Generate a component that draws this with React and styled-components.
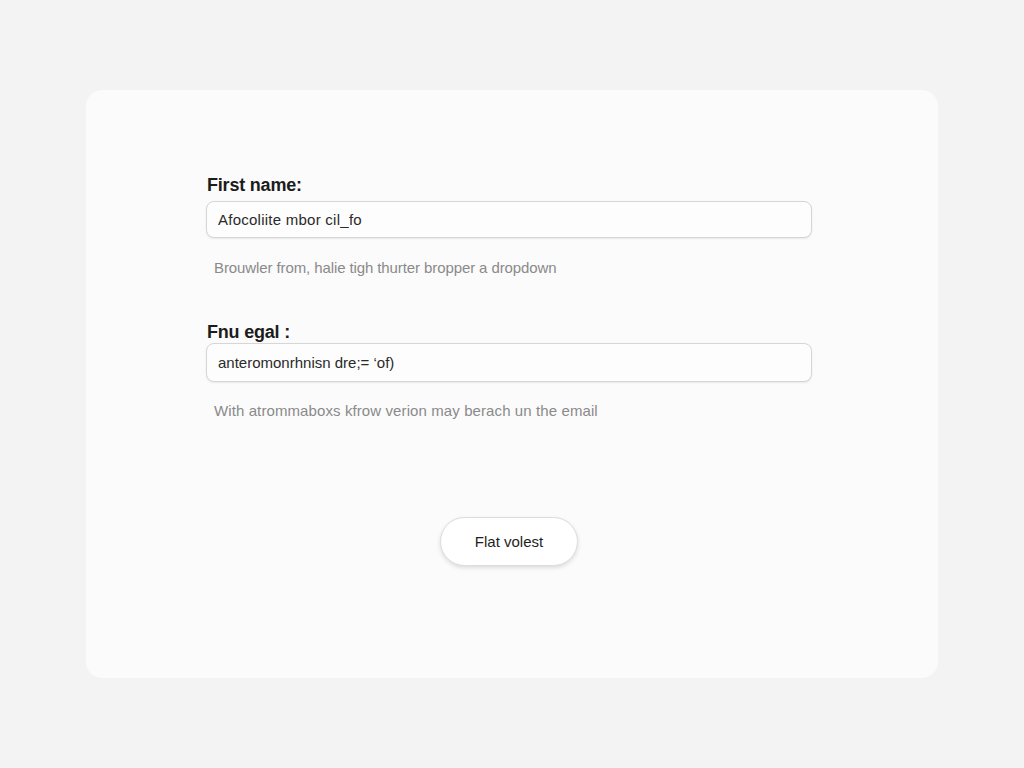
import React from "react";
import styled, { createGlobalStyle } from "styled-components";

const GlobalStyle = createGlobalStyle`
  html, body {
    margin: 0;
    padding: 0;
    background: #f3f3f3;
    font-family: "Liberation Sans", Arial, sans-serif;
  }
`;

const Page = styled.div`
  width: 1024px;
  height: 768px;
  padding: 90px 86px;
  box-sizing: border-box;
`;

const Card = styled.div`
  height: 588px;
  background: #fbfbfb;
  border-radius: 16px;
  padding: 84px 126px 0 120px;
  box-sizing: border-box;
  display: flex;
  flex-direction: column;
`;

const Field = styled.div`
  display: flex;
  flex-direction: column;
  margin-bottom: ${(p) => p.$gap || 0}px;
`;

const Label = styled.label`
  font-size: 18px;
  line-height: 22px;
  font-weight: 700;
  color: #1c1c1c;
  padding-left: 1px;
  margin-bottom: ${(p) => p.$mb}px;
  letter-spacing: -0.2px;
`;

const Input = styled.div`
  height: ${(p) => p.$h}px;
  box-sizing: border-box;
  border: 1px solid #d6d6d6;
  border-radius: 8px;
  background: #fdfdfd;
  box-shadow: 0 1px 2px rgba(0, 0, 0, 0.08);
  display: flex;
  align-items: center;
  padding: 0 11px;
  font-size: 15px;
  color: #2a2a2a;
  letter-spacing: ${(p) => p.$ls || 0}px;
`;

const Help = styled.p`
  margin: ${(p) => p.$top}px 0 0 8px;
  font-size: 15px;
  line-height: 18px;
  color: #8a8a8a;
  letter-spacing: ${(p) => p.$ls}px;
`;

const Actions = styled.div`
  display: flex;
  justify-content: center;
  margin-top: 97px;
`;

const Button = styled.button`
  width: 138px;
  height: 49px;
  border-radius: 25px;
  border: 1px solid #dcdcdc;
  background: #ffffff;
  box-shadow: 0 2px 4px rgba(0, 0, 0, 0.12);
  font-family: "Liberation Sans", Arial, sans-serif;
  font-size: 15px;
  color: #1e1e1e;
  cursor: pointer;
`;

export default function App() {
  return (
    <>
      <GlobalStyle />
      <Page>
        <Card>
          <Field $gap={44}>
            <Label $mb={5}>First name:</Label>
            <Input $h={37} $ls={0.25}>Afocoliite mbor cil_fo</Input>
            <Help $top={21} $ls={-0.1}>
              Brouwler from, halie tigh thurter bropper a dropdown
            </Help>
          </Field>
          <Field>
            <Label $mb={0}>Fnu egal :</Label>
            <Input $h={39}>anteromonrhnisn dre;= ‘of)</Input>
            <Help $top={20} $ls={0.1}>
              With atrommaboxs kfrow verion may berach un the email
            </Help>
          </Field>
          <Actions>
            <Button>Flat volest</Button>
          </Actions>
        </Card>
      </Page>
    </>
  );
}
